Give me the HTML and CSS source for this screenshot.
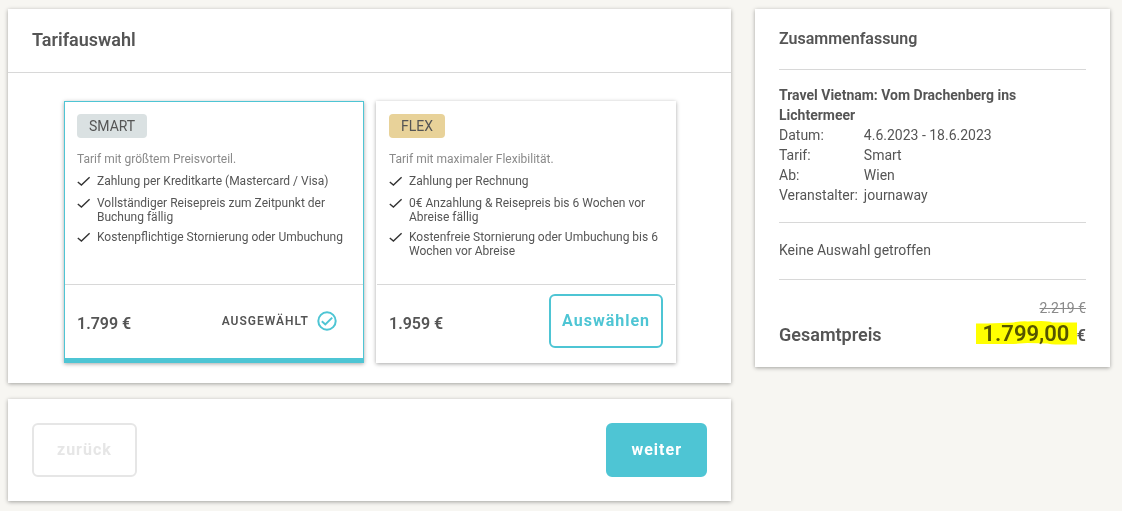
FILE: index.html
```html
<!DOCTYPE html>
<html lang="de">
<head>
    <meta charset="UTF-8">
    <meta name="viewport" content="width=device-width, initial-scale=1.0">
    <title>Tarifauswahl</title>
    <link rel="stylesheet" href="styles.css">
</head>
<body>
    <svg class="sprite" aria-hidden="true">
        <symbol id="check" viewBox="0 0 14 14">
            <path d="M0.8 8 L4.4 11 L12.6 3.2" fill="none" stroke="#333" stroke-width="1.4"/>
        </symbol>
    </svg>

    <div class="page">
        <main class="content">
            <section class="card">
                <div class="card-header">
                    <h1>Tarifauswahl</h1>
                </div>

                <div class="tariffs">
                    <article class="tariff selected">
                        <div class="tariff-body">
                            <h2 class="badge badge-smart">SMART</h2>
                            <p class="tariff-text">Tarif mit größtem Preisvorteil.</p>
                            <ul class="features">
                                <li><svg class="check"><use href="#check"/></svg><span>Zahlung per Kreditkarte (Mastercard / Visa)</span></li>
                                <li><svg class="check"><use href="#check"/></svg><span>Vollständiger Reisepreis zum Zeitpunkt der Buchung fällig</span></li>
                                <li><svg class="check"><use href="#check"/></svg><span>Kostenpflichtige Stornierung oder Umbuchung</span></li>
                            </ul>
                        </div>
                        <div class="tariff-footer">
                            <span class="price">1.799 €</span>
                            <span class="chosen">
                                Ausgewählt
                                <svg class="chosen-icon" viewBox="0 0 20 20" fill="none" stroke="#4ec5d4" stroke-width="2">
                                    <circle cx="10" cy="10" r="8.7"/>
                                    <path d="M4.8 10.3 L8.3 13.4 L15.2 6.6"/>
                                </svg>
                            </span>
                        </div>
                    </article>

                    <article class="tariff">
                        <div class="tariff-body">
                            <h2 class="badge badge-flex">FLEX</h2>
                            <p class="tariff-text">Tarif mit maximaler Flexibilität.</p>
                            <ul class="features">
                                <li><svg class="check"><use href="#check"/></svg><span>Zahlung per Rechnung</span></li>
                                <li><svg class="check"><use href="#check"/></svg><span>0€ Anzahlung &amp; Reisepreis bis 6 Wochen vor Abreise fällig</span></li>
                                <li><svg class="check"><use href="#check"/></svg><span>Kostenfreie Stornierung oder Umbuchung bis 6 Wochen vor Abreise</span></li>
                            </ul>
                        </div>
                        <div class="tariff-footer">
                            <span class="price">1.959 €</span>
                            <button type="button" class="btn btn-outline">Auswählen</button>
                        </div>
                    </article>
                </div>
            </section>

            <nav class="card actions">
                <button type="button" class="btn btn-back" disabled>zurück</button>
                <button type="button" class="btn btn-primary">weiter</button>
            </nav>
        </main>

        <aside class="card summary">
            <h2 class="summary-title">Zusammenfassung</h2>

            <div class="summary-trip">
                <h3>Travel Vietnam: Vom Drachenberg ins Lichtermeer</h3>
                <dl>
                    <dt>Datum:</dt>
                    <dd>4.6.2023 - 18.6.2023</dd>
                    <dt>Tarif:</dt>
                    <dd>Smart</dd>
                    <dt>Ab:</dt>
                    <dd>Wien</dd>
                    <dt>Veranstalter:</dt>
                    <dd>journaway</dd>
                </dl>
            </div>

            <p class="summary-empty">Keine Auswahl getroffen</p>

            <div class="summary-total">
                <del>2.219 €</del>
                <div class="total-row">
                    <span class="total-label">Gesamtpreis</span>
                    <span class="total-price">
                        <span class="amount">1.799,00<svg class="marker" viewBox="0 0 103 25" preserveAspectRatio="none"><path d="M0 2.5 H12 L38 1.5 Q42 0.2 52 0.4 L66 0 Q74 0.2 77 1.4 L103 1.6 V23.4 H84 Q78 24 72 22.6 L52 22 L38 23 H0 Z" fill="#ffff00"/></svg></span>
                        <span class="currency">€</span>
                    </span>
                </div>
            </div>
        </aside>
    </div>
</body>
</html>
```
FILE: styles.css
```css
* {
    margin: 0;
    padding: 0;
    box-sizing: border-box;
}

body {
    font-family: Roboto, Arial, sans-serif;
    font-size: 14px;
    line-height: 20px;
    color: #555;
    background: #f7f6f2;
}

.sprite {
    display: none;
}

.page {
    display: grid;
    grid-template-columns: minmax(0, 1fr) 355px;
    align-items: start;
    gap: 24px;
    padding: 9px 12px 9px 8px;
}

.content {
    display: flex;
    flex-direction: column;
    gap: 16px;
}

.card {
    background: white;
    box-shadow: 0 1px 4px rgba(0, 0, 0, 0.35);
}

.card-header {
    padding: 21px 24px 22px;
    border-bottom: 1px solid #d8d8d8;
}

h1 {
    font-size: 18px;
    font-weight: 600;
}

/* Tariffs */
.tariffs {
    display: flex;
    justify-content: center;
    gap: 12px;
    padding: 28px 24px 20px 25px;
}

.tariff {
    display: flex;
    flex-direction: column;
    flex: 0 1 300px;
    background: white;
    border: 1px solid transparent;
    border-bottom-width: 5px;
    box-shadow: 0 1px 4px rgba(0, 0, 0, 0.35);
}

.tariff.selected {
    border-color: #4ec5d4;
}

.tariff-body {
    flex: 1;
    padding: 12px 12px 26px;
}

.badge {
    display: inline-block;
    padding: 0 12px;
    border-radius: 4px;
    font-size: 14px;
    font-weight: 400;
    line-height: 24px;
    vertical-align: top;
}

.badge-smart {
    background: #dae1e2;
}

.badge-flex {
    background: #e8d299;
}

.tariff-text {
    margin: 14px 0 8px;
    font-size: 12px;
    line-height: 14px;
    color: #8a8a8a;
}

.features {
    display: flex;
    flex-direction: column;
    gap: 6px;
    list-style: none;
    font-size: 12px;
    line-height: 14px;
}

.features li {
    display: flex;
    gap: 6px;
    min-height: 16px;
}

.check {
    flex: none;
    width: 14px;
    height: 14px;
}

.tariff-footer {
    display: flex;
    align-items: center;
    justify-content: space-between;
    min-height: 74px;
    padding: 9px 12px 10px;
    border-top: 1px solid #d8d8d8;
}

.price {
    padding-top: 6px;
    font-size: 16px;
    font-weight: 600;
}

.chosen {
    display: flex;
    align-items: center;
    gap: 8px;
    padding-right: 14px;
    font-size: 12px;
    font-weight: 600;
    letter-spacing: 1px;
    text-transform: uppercase;
}

.chosen-icon {
    width: 20px;
    height: 20px;
}

/* Buttons */
.btn {
    height: 54px;
    padding: 0 23px 2px;
    border: 2px solid #4ec5d4;
    border-radius: 6px;
    font-family: inherit;
    font-size: 16px;
    font-weight: 700;
    letter-spacing: 1px;
    cursor: pointer;
}

.btn-outline {
    padding: 0 11px 2px;
    background: white;
    color: #4ec5d4;
}

.btn-primary {
    background: #4ec5d4;
    color: white;
}

.btn-back {
    background: white;
    border-color: #e6e6e6;
    color: #e6e6e6;
    cursor: not-allowed;
}

.actions {
    display: flex;
    justify-content: space-between;
    padding: 24px;
}

/* Summary */
.summary {
    padding: 20px 24px 15px;
}

.summary-title {
    padding-bottom: 20px;
    font-size: 16px;
    font-weight: 600;
}

.summary-trip,
.summary-empty,
.summary-total {
    border-top: 1px solid #d8d8d8;
}

.summary-trip {
    padding: 15px 0 17px;
}

.summary-trip h3 {
    font-size: 14px;
    font-weight: 700;
}

.summary-trip dl {
    display: grid;
    grid-template-columns: auto 1fr;
    column-gap: 6px;
}

.summary-empty {
    padding: 17px 0 19px;
}

.summary-total {
    padding-top: 18px;
}

.summary-total del {
    display: block;
    text-align: right;
    color: #8a8a8a;
}

.total-row {
    display: flex;
    align-items: baseline;
    justify-content: space-between;
    line-height: 32px;
    font-weight: 600;
}

.total-label {
    font-size: 18px;
}

.amount {
    position: relative;
    margin-right: 4px;
    font-size: 22px;
}

.currency {
    font-size: 16px;
}

/* highlighter stroke over the amount */
.marker {
    position: absolute;
    top: 0;
    left: -7px;
    width: calc(100% + 15px);
    height: 25px;
    mix-blend-mode: multiply;
}
```
